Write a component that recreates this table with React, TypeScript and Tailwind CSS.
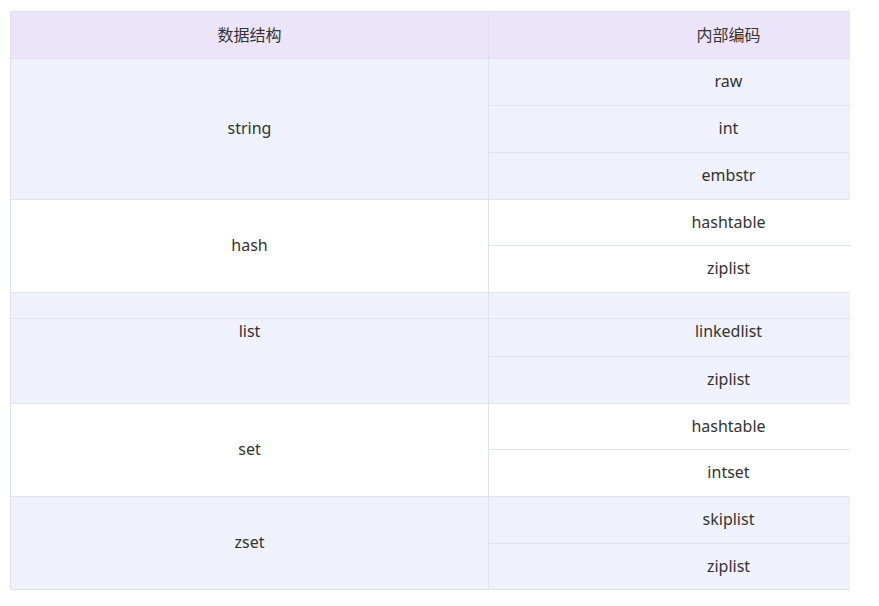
import * as React from "react";

type Cell = { text: string; rowSpan?: number; top?: boolean };
type Row = { h: number; left?: Cell; right: Cell; striped: boolean };

const rows: Row[] = [
  { h: 47, left: { text: "string", rowSpan: 3 }, right: { text: "raw" }, striped: true },
  { h: 47, right: { text: "int" }, striped: true },
  { h: 47, right: { text: "embstr" }, striped: true },
  { h: 46, left: { text: "hash", rowSpan: 2 }, right: { text: "hashtable" }, striped: false },
  { h: 47, right: { text: "ziplist" }, striped: false },
  { h: 26, left: { text: "" }, right: { text: "" }, striped: true },
  { h: 38, left: { text: "list", rowSpan: 2, top: true }, right: { text: "linkedlist", top: true }, striped: true },
  { h: 47, right: { text: "ziplist" }, striped: true },
  { h: 46, left: { text: "set", rowSpan: 2 }, right: { text: "hashtable" }, striped: false },
  { h: 47, right: { text: "intset" }, striped: false },
  { h: 47, left: { text: "zset", rowSpan: 2 }, right: { text: "skiplist" }, striped: true },
  { h: 46, right: { text: "ziplist" }, striped: true },
];

export default function App() {
  return (
    <div
      className="min-h-[606px] bg-white pt-[11px] text-[16px] text-[#333]"
      style={{ fontFamily: '"Noto Sans", "Noto Sans CJK SC", sans-serif' }}
    >
      <div className="ml-[10px] w-[840px] overflow-hidden">
        <table className="w-[958px] table-fixed border-collapse">
          <colgroup>
            <col className="w-[478px]" />
            <col className="w-[480px]" />
          </colgroup>
          <thead>
            <tr className="h-[47px] bg-[#ece4fb]">
              <th className="border border-[#e0e0ee] text-center font-normal">数据结构</th>
              <th className="border border-[#e0e0ee] text-center font-normal">内部编码</th>
            </tr>
          </thead>
          <tbody>
            {rows.map((r, i) => (
              <tr key={i} style={{ height: r.h }} className={r.striped ? "bg-[#eff2fd]" : "bg-white"}>
                {r.left && (
                  <td
                    rowSpan={r.left.rowSpan}
                    className={`border border-[#dfe3ec] text-center ${r.left.top ? "pt-0 align-top" : "pb-[2px] align-middle"}`}
                  >
                    {r.left.text}
                  </td>
                )}
                <td
                  className={`border border-[#dfe3ec] text-center ${r.right.top ? "pt-0 align-top" : "pb-[2px] align-middle"}`}
                >
                  {r.right.text}
                </td>
              </tr>
            ))}
          </tbody>
        </table>
      </div>
    </div>
  );
}
